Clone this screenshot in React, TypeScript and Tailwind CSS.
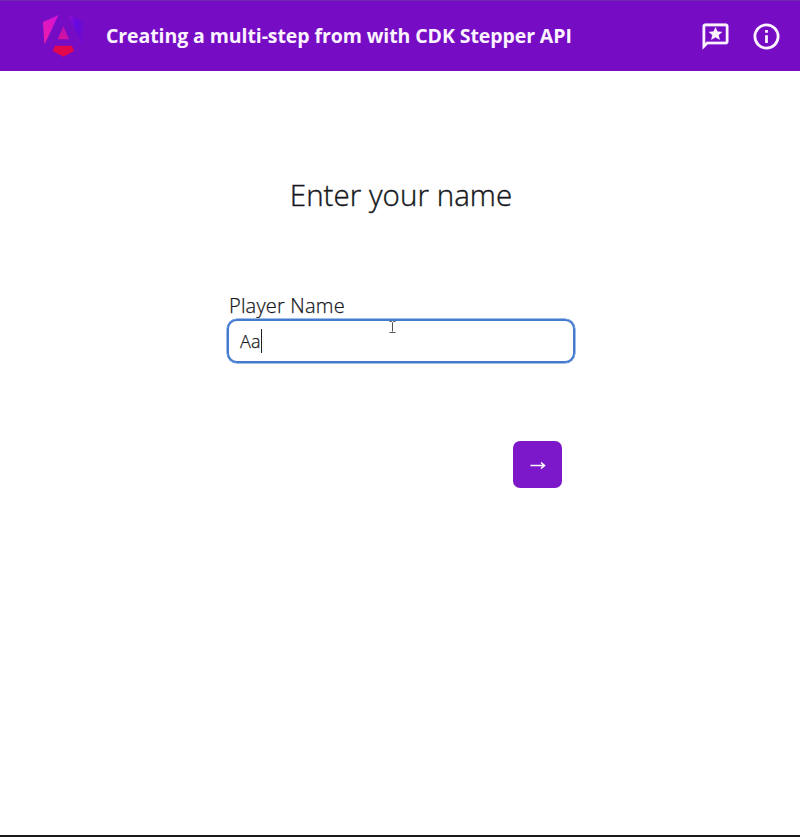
import React from "react";

function Logo() {
  return (
    <svg viewBox="0 0 223 236" className="ml-[43px] h-[42px] w-[41px] shrink-0" preserveAspectRatio="none" aria-hidden="true">
      <defs>
        <linearGradient id="left" x1="0" y1="1" x2="0.6" y2="0">
          <stop offset="0" stopColor="#f01fa5" />
          <stop offset="1" stopColor="#d414d2" />
        </linearGradient>
        <linearGradient id="right" x1="0" y1="0" x2="1" y2="0.3">
          <stop offset="0" stopColor="#9c0fd0" />
          <stop offset="0.55" stopColor="#6508e2" />
          <stop offset="1" stopColor="#700bce" />
        </linearGradient>
        <linearGradient id="middle" x1="0" y1="1" x2="0.7" y2="0">
          <stop offset="0" stopColor="#df1295" />
          <stop offset="1" stopColor="#b811bd" />
        </linearGradient>
      </defs>
      <path fill="url(#right)" d="m222.077 39.192-8.019 125.923L137.387 0l84.69 39.192Z" />
      <path fill="#e3084e" d="m168.972 202.017-57.933 33.056-57.934-33.056 11.783-28.556h92.301l11.783 28.556Z" />
      <path fill="url(#middle)" d="m111.039 62.675 30.357 73.803H80.681l30.358-73.803Z" />
      <path fill="url(#left)" d="M7.937 165.115 0 39.192 84.69 0 7.937 165.115Z" />
    </svg>
  );
}

function ReviewIcon() {
  return (
    <svg viewBox="0 0 24 24" className="size-[31px]" fill="currentColor" stroke="currentColor" strokeWidth="0.15" aria-hidden="true">
      <path d="M20 2H4c-1.1 0-2 .9-2 2v18l4-4h14c1.1 0 2-.9 2-2V4c0-1.1-.9-2-2-2zm0 14H5.17L4 17.17V4h16v12z" />
      <path d="m12 4.8 1.5 3.4 3.7.3-2.8 2.4.9 3.6-3.3-1.9-3.3 1.9.9-3.6-2.8-2.4 3.7-.3z" />
    </svg>
  );
}

function InfoIcon() {
  return (
    <svg viewBox="0 0 24 24" className="size-[31px]" fill="none" stroke="currentColor" strokeWidth="2.15" aria-hidden="true">
      <circle cx="12" cy="12" r="9" />
      <path d="M12 11v6M12 7v2" />
    </svg>
  );
}

export default function App() {
  return (
    <div className="flex h-[837px] w-[800px] flex-col overflow-hidden border-b-2 border-[#18181b] bg-white font-['Open_Sans',sans-serif] text-[#15171c]">
      <header className="flex h-[71px] shrink-0 items-center border-t border-[#7129ae] bg-[#760dc5] text-[#fdf3ff]">
        <Logo />
        <h1 className="ml-[22px] w-[480px] whitespace-nowrap text-[19.5px] font-bold tracking-[-0.09px]">Creating a multi-step from with CDK Stepper API</h1>
        <div className="ml-auto mr-[18px] flex gap-[20px]">
          <button aria-label="Reviews"><ReviewIcon /></button>
          <button aria-label="Information"><InfoIcon /></button>
        </div>
      </header>
      <main className="flex flex-col items-center">
        <h2 className="mt-[102px] ml-[2px] whitespace-nowrap text-[29.5px] font-light leading-[44px] tracking-[0.05px] [-webkit-text-stroke:0.4px_#15171c]">Enter your name</h2>
        <form className="mt-[76px] ml-[2px] w-[348px]" onSubmit={(e) => e.preventDefault()}>
          <label htmlFor="player" className="ml-[2px] block h-[26px] whitespace-nowrap text-[20px] font-light leading-[26px] tracking-[0.2px] [-webkit-text-stroke:0.25px_#15171c]">Player Name</label>
          <div id="player" className="relative flex h-[44px] items-center rounded-[10px] border-2 border-[#447bd0] pl-[11px] text-[18px] font-light shadow-[0_0_0_0.5px_#447bd0]">
            <span className="tracking-[0.3px] [-webkit-text-stroke:0.25px_#15171c]">Aa</span>
            <span className="h-[24px] w-px bg-[#222]" />
            <svg viewBox="0 0 7 12" className="absolute left-[160px] top-0 h-[12px] w-[7px]" fill="none" stroke="#555">
              <path d="M.5.5h2l1 1 1-1h2M3.5 1.5v9M.5 11.5h6" />
            </svg>
          </div>
          <div className="mt-[78px] mr-[13px] flex justify-end">
            <button aria-label="Next" className="flex h-[47px] w-[49px] items-center justify-center rounded-[7px] bg-[#7c18c9] text-white">
              <svg viewBox="0 0 16 10" className="h-[10px] w-[16px]" fill="none" stroke="currentColor" strokeWidth="1.6">
                <path d="M.5 5.5h14M11 2.5l3.5 3L11 8.5" />
              </svg>
            </button>
          </div>
        </form>
      </main>
    </div>
  );
}
